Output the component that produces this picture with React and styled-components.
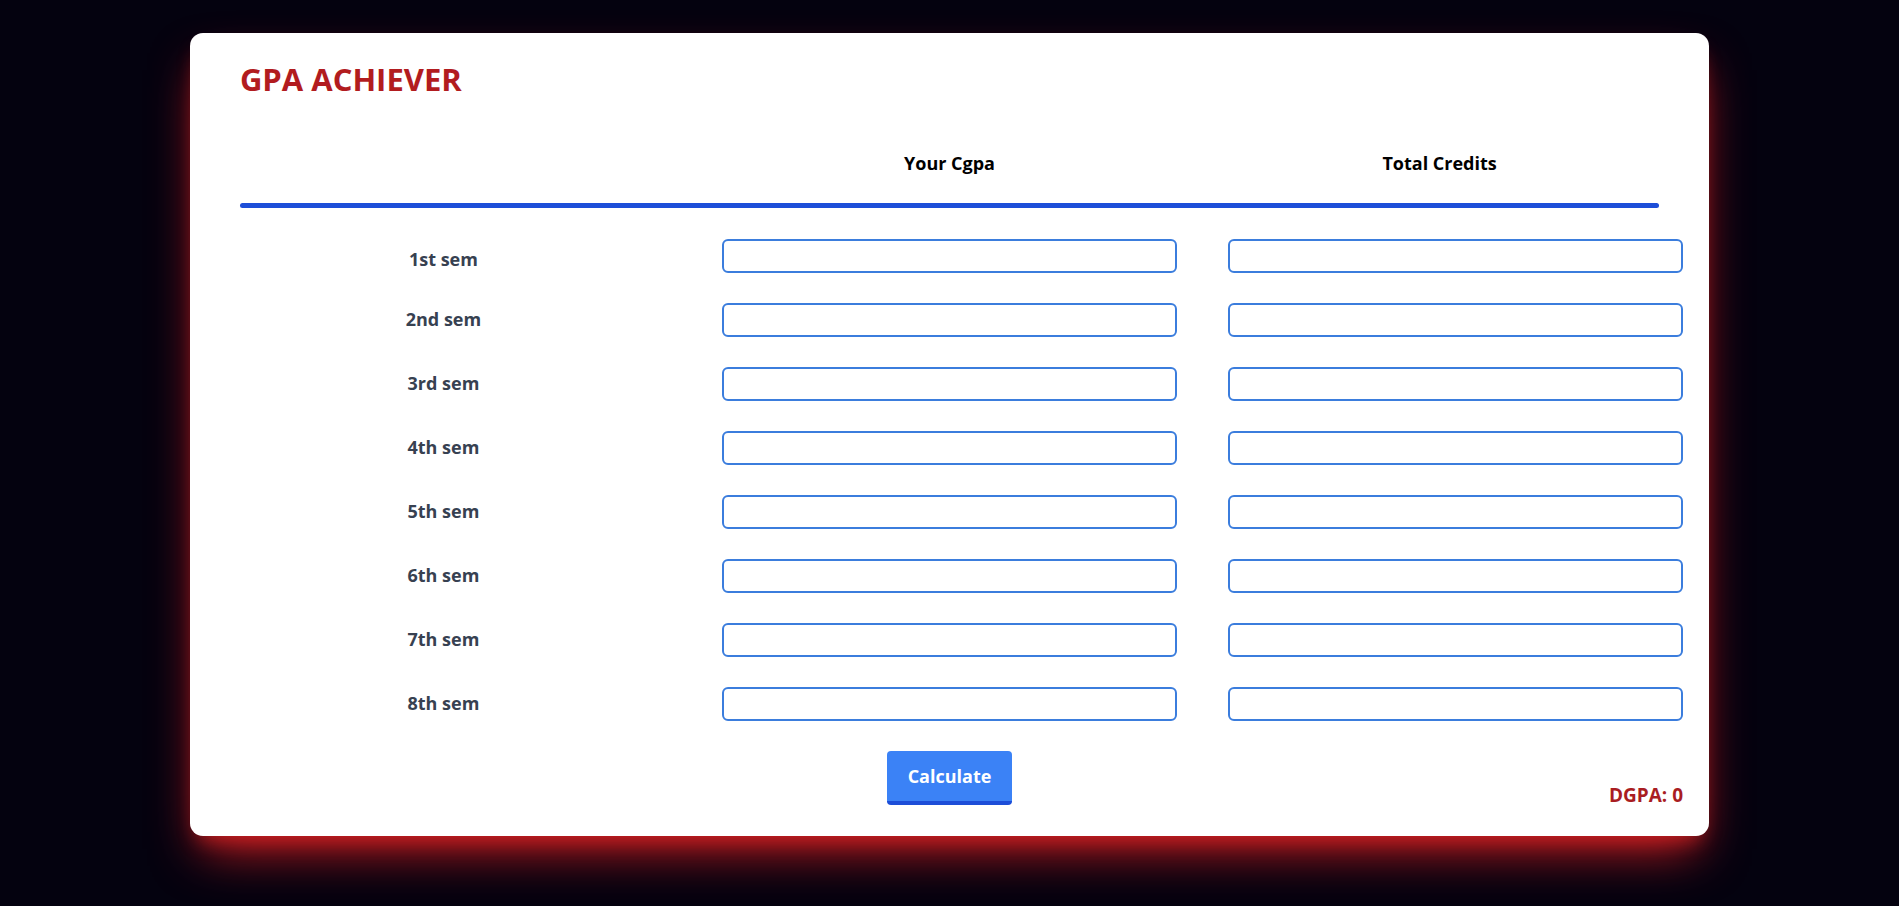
import React, { useState } from "react";
import styled, { createGlobalStyle } from "styled-components";

const GlobalStyle = createGlobalStyle`
  html, body {
    margin: 0;
    padding: 0;
    background: #04020f;
    font-family: "Open Sans", "Noto Sans", Arial, sans-serif;
  }
  * { box-sizing: border-box; }
`;

const Page = styled.div`
  min-height: 100vh;
  display: flex;
  justify-content: center;
  align-items: flex-start;
  padding-top: 33px;
`;

const Card = styled.div`
  width: 80%;
  background: #ffffff;
  border-radius: 13px;
  box-shadow: 0 25px 50px -12px #d11f22, 0 12px 20px -10px #b91c1c;
  padding: 0 26px 31px;
`;

const Header = styled.div`
  padding: 0 24px;
`;

const Title = styled.h1`
  margin: 28px 0 0;
  font-size: 31px;
  line-height: 36px;
  font-weight: 700;
  color: #b21c1f;
`;

const Grid = styled.div`
  display: grid;
  grid-template-columns: repeat(3, 1fr);
  column-gap: 51px;
`;

const HeadRow = styled(Grid)`
  margin-top: 52px;
`;

const HeadCell = styled.div`
  text-align: center;
  font-size: 18px;
  line-height: 28px;
  font-weight: 700;
  color: #000000;
`;

const Divider = styled.div`
  margin-top: 26px;
  height: 5px;
  border-radius: 3px;
  background: #1d4ed8;
`;

const Rows = styled.div`
  margin-top: 31px;
  display: flex;
  flex-direction: column;
  gap: 30px;
`;

const Row = styled(Grid)`
  height: 34px;
  align-items: start;
`;

const Label = styled.div`
  text-align: center;
  padding-top: ${(p) => (p.$first ? "6px" : "2px")};
  font-size: 18px;
  line-height: 28px;
  font-weight: 700;
  color: #374151;
`;

const Field = styled.input`
  width: 100%;
  height: 34px;
  border: 2px solid #3b7ddd;
  border-radius: 6px;
  background: #fff;
  font-family: inherit;
  font-size: 16px;
  padding: 0 8px;
  outline: none;
`;

const Footer = styled(Grid)`
  margin-top: 30px;
  align-items: end;
`;

const Button = styled.button`
  grid-column: 2;
  justify-self: center;
  height: 54px;
  padding: 0 21px;
  border: none;
  border-bottom: 4px solid #1d4ed8;
  border-radius: 4px;
  background: #3b82f6;
  color: #ffffff;
  font-family: inherit;
  font-size: 18px;
  font-weight: 700;
  cursor: pointer;
`;

const Result = styled.div`
  grid-column: 3;
  justify-self: end;
  font-size: 19px;
  line-height: 19px;
  font-weight: 700;
  color: #a91d22;
`;

const sems = ["1st", "2nd", "3rd", "4th", "5th", "6th", "7th", "8th"];

export default function App() {
  const [dgpa] = useState(0);
  return (
    <>
      <GlobalStyle />
      <Page>
        <Card>
          <Header>
            <Title>GPA ACHIEVER</Title>
            <HeadRow>
              <HeadCell />
              <HeadCell>Your Cgpa</HeadCell>
              <HeadCell>Total Credits</HeadCell>
            </HeadRow>
            <Divider />
          </Header>
          <Rows>
            {sems.map((s, i) => (
              <Row key={s}>
                <Label $first={i === 0}>{s} sem</Label>
                <Field type="text" />
                <Field type="text" />
              </Row>
            ))}
          </Rows>
          <Footer>
            <Button>Calculate</Button>
            <Result>DGPA: {dgpa}</Result>
          </Footer>
        </Card>
      </Page>
    </>
  );
}
